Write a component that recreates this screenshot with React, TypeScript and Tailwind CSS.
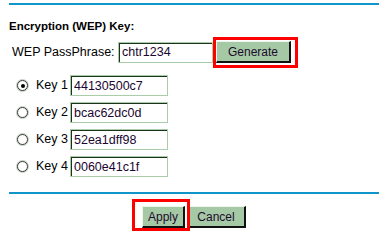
import React from "react";

const keys = [
	{ label: "Key 1", value: "44130500c7", checked: true },
	{ label: "Key 2", value: "bcac62dc0d", checked: false },
	{ label: "Key 3", value: "52ea1dff98", checked: false },
	{ label: "Key 4", value: "0060e41c1f", checked: false },
];

const inputCls =
	"h-[21px] border border-[#a9cda9] shadow-[inset_1px_1px_0_#1c331c] bg-white px-[3px] text-[12.5px] text-[#1a0630] outline-none font-['Liberation_Sans',sans-serif]";

const btnCls =
	"h-[22px] bg-[#a5c9a5] border-t border-l border-t-[#eef5ee] border-l-[#eef5ee] border-r-2 border-b-2 border-r-[#111] border-b-[#111] text-[12px] text-[#1e0a2e] leading-none font-['Liberation_Sans',sans-serif]";

function Radio({ checked }: { checked: boolean }) {
	return (
		<span className="flex items-center justify-center w-[11px] h-[11px] rounded-full border border-[#3a3a3a] bg-white shadow-[0_0_0_1px_#c3d3c3]">
			{checked && <span className="w-[4px] h-[4px] rounded-full bg-black" />}
		</span>
	);
}

export default function App() {
	return (
		<div className="w-[385px] h-[234px] bg-white text-black text-[12.5px] font-['Liberation_Sans',Arial,sans-serif] overflow-hidden">
			<div className="ml-[9px] w-[370px] pt-[3px]">
				<div className="h-[2px] bg-[#0f95c8]" />
				<div className="mt-[14px] h-[14px] leading-[14px] text-[11.5px] font-bold">
					Encryption (WEP) Key:
				</div>
				<div className="mt-[8px] flex items-center pl-[3px]">
					<span className="w-[106px]">WEP PassPhrase:</span>
					<input className={`${inputCls} w-[95px]`} defaultValue="chtr1234" />
					<div className="relative ml-[3px]">
						<button className={`${btnCls} w-[75px]`}>Generate</button>
						<div className="absolute left-[-3px] top-[-4px] w-[85px] h-[31px] border-[3px] border-[#ff0000]" />
					</div>
				</div>
				<div className="mt-[12px] flex flex-col gap-[6px] pl-[8px]">
					{keys.map((k) => (
						<div key={k.label} className="flex items-center h-[21px]">
							<Radio checked={k.checked} />
							<span className="ml-[8px] w-[34px]">{k.label}</span>
							<input className={`${inputCls} w-[98px]`} defaultValue={k.value} />
						</div>
					))}
				</div>
				<div className="mt-[15px] h-[2px] bg-[#0f95c8]" />
				<div className="mt-[12px] flex justify-center gap-[2px]">
					<div className="relative">
						<button className={`${btnCls} w-[43px]`}>Apply</button>
						<div className="absolute left-[-10px] top-[-7px] w-[58px] h-[32px] border-[3px] border-[#ff0000]" />
					</div>
					<button className={`${btnCls} w-[59px]`}>Cancel</button>
				</div>
			</div>
		</div>
	);
}
